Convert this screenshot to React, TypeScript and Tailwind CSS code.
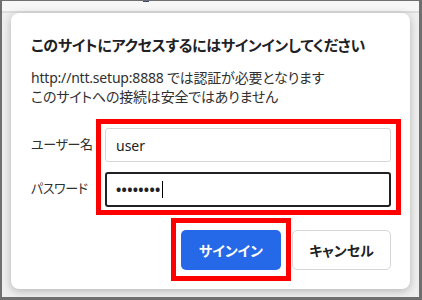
export default function App() {
  return (
    <div className="w-[422px] h-[300px] overflow-hidden flex flex-col bg-[#efefef] border-t border-l-2 border-r-[3px] border-b-[3px] border-[#6f6f6f] font-['Noto_Sans','Noto_Sans_CJK_JP',sans-serif] [font-feature-settings:'palt'] text-[#202124]">
      {/* browser strip */}
      <div className="h-[12px] shrink-0 bg-[#f7f7f7] border-b-2 border-[#dddddd]">
        <div className="ml-[141px] -mt-px w-[6px] h-[2px] bg-[#3a4a6a]" />
      </div>

      {/* Sign-in dialog */}
      <div className="mx-[9px] h-[276px] shrink-0 bg-white rounded-[8px] shadow-[0_2px_8px_rgba(0,0,0,0.25)] pl-[20px] pr-[9px] pt-[21px] pb-[8px] flex flex-col">
        <h1 className="text-[15px] leading-[22px] font-bold tracking-[-0.3px] whitespace-nowrap">
          このサイトにアクセスするにはサインインしてください
        </h1>
        <div className="mt-[12px] text-[14px] leading-[19px] text-[#303030] tracking-[-0.2px]">
          <p>http://ntt.setup:8888 では認証が必要となります</p>
          <p>このサイトへの接続は安全ではありません</p>
        </div>

        {/* form */}
        <div className="mt-[13px] flex">
          <div className="w-[65px] shrink-0 pt-[9px] flex flex-col text-[13px] tracking-[-0.4px] text-[#303030] whitespace-nowrap">
            <div className="h-[34px] flex items-center">ユーザー名</div>
            <div className="mt-[10px] h-[34px] flex items-center">パスワード</div>
          </div>
          <div className="w-[305px] border-[5px] border-[#ff0000] pt-[4px] pl-[4px] pr-[5px] pb-[3px] flex flex-col gap-[10px]">
            <div className="h-[34px] border border-[#d6d6d6] rounded-[3px] flex items-center pl-[10px] text-[14px] text-[#202124]">
              user
            </div>
            <div className="h-[35px] border-2 border-[#202124] rounded-[3px] flex items-center pl-[9px] text-[#202124]">
              <span className="text-[14px] font-bold tracking-[0.3px] leading-none">••••••••</span>
              <span className="ml-[1px] w-px h-[17px] bg-black" />
            </div>
          </div>
        </div>

        {/* buttons */}
        <div className="mt-[3px] flex justify-end pr-[10px]">
          <div className="border-[5px] border-[#ff0000] px-[5px] pt-[7px] pb-[6px]">
            <button className="w-[100px] h-[40px] rounded-[5px] bg-[#2568e8] text-white text-[14px] font-bold">
              サインイン
            </button>
          </div>
          <div className="ml-px pt-[12px]">
            <button className="w-[99px] h-[40px] rounded-[5px] bg-white border border-[#d6d6d6] text-[#202124] text-[14px] font-bold">
              キャンセル
            </button>
          </div>
        </div>
      </div>
    </div>
  );
}
